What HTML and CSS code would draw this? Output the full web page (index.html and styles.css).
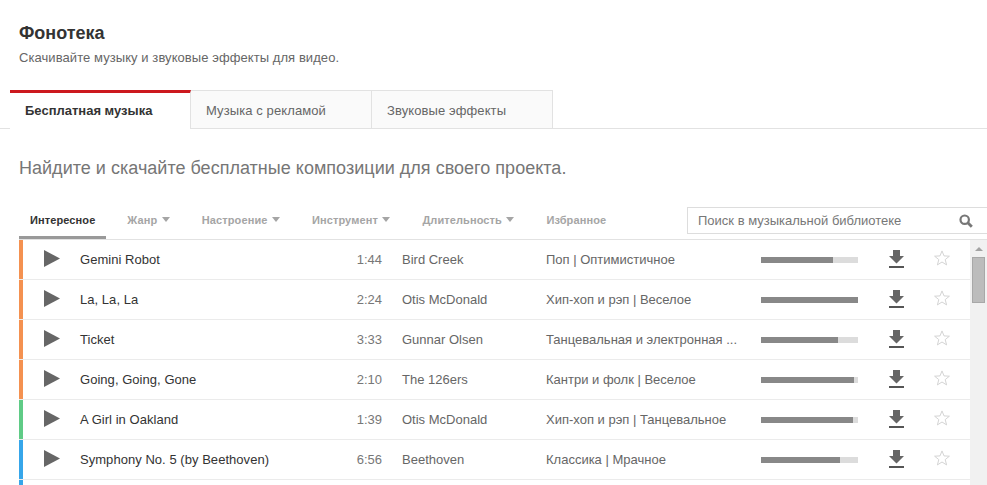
FILE: index.html
```html
<!DOCTYPE html>
<html lang="ru">
<head>
<meta charset="utf-8">
<title>Фонотека</title>
<link rel="stylesheet" href="styles.css">
</head>
<body>
<svg class="defs" width="0" height="0" aria-hidden="true">
  <symbol id="play" viewBox="0 0 16 17"><path d="M0 0L16 8.5L0 17Z" fill="#666"/></symbol>
  <symbol id="dl" viewBox="0 0 15 18"><path d="M4 0H11V6H15L7.5 13.5L0 6H4Z" fill="#666"/><rect y="16" width="15" height="2" fill="#555"/></symbol>
  <symbol id="star" viewBox="0 0 16 16"><path d="M8 .9L10 5.9L15.4 6.2L11.2 9.6L12.6 14.9L8 12L3.4 14.9L4.8 9.6L.6 6.2L6 5.9Z" fill="#fff" stroke="#d4d4d4" stroke-width="1"/></symbol>
</svg>
<header class="head">
  <h1 class="title">Фонотека</h1>
  <p class="sub">Скачивайте музыку и звуковые эффекты для видео.</p>
</header>
<nav class="tabs">
  <a class="tab tab-on">Бесплатная музыка</a>
  <a class="tab">Музыка с рекламой</a>
  <a class="tab">Звуковые эффекты</a>
</nav>
<h2 class="lead">Найдите и скачайте бесплатные композиции для своего проекта.</h2>
<div class="bar">
  <div class="filters">
    <a class="filter filter-on">Интересное</a>
    <a class="filter">Жанр<i class="caret"></i></a>
    <a class="filter">Настроение<i class="caret"></i></a>
    <a class="filter">Инструмент<i class="caret"></i></a>
    <a class="filter">Длительность<i class="caret"></i></a>
    <a class="filter">Избранное</a>
  </div>
  <div class="search">
    <span class="search-text">Поиск в музыкальной библиотеке</span>
    <svg class="search-icon" width="14" height="14" viewBox="0 0 14 14"><circle cx="5.7" cy="5.7" r="4.2" fill="none" stroke="#777" stroke-width="2.2"/><path d="M8.8 8.8L12.8 12.8" stroke="#777" stroke-width="2.8"/></svg>
  </div>
</div>
<div class="panel">
  <div class="list">
    <div class="row orange"><svg class="play"><use href="#play"/></svg><span class="name">Gemini Robot</span><span class="time">1:44</span><span class="artist">Bird Creek</span><span class="genre">Поп | Оптимистичное</span><span class="meter"><b style="width:74%"></b></span><svg class="dl"><use href="#dl"/></svg><svg class="star"><use href="#star"/></svg></div>
    <div class="row orange"><svg class="play"><use href="#play"/></svg><span class="name">La, La, La</span><span class="time">2:24</span><span class="artist">Otis McDonald</span><span class="genre">Хип-хоп и рэп | Веселое</span><span class="meter"><b style="width:100%"></b></span><svg class="dl"><use href="#dl"/></svg><svg class="star"><use href="#star"/></svg></div>
    <div class="row orange"><svg class="play"><use href="#play"/></svg><span class="name">Ticket</span><span class="time">3:33</span><span class="artist">Gunnar Olsen</span><span class="genre">Танцевальная и электронная ...</span><span class="meter"><b style="width:79%"></b></span><svg class="dl"><use href="#dl"/></svg><svg class="star"><use href="#star"/></svg></div>
    <div class="row orange"><svg class="play"><use href="#play"/></svg><span class="name">Going, Going, Gone</span><span class="time">2:10</span><span class="artist">The 126ers</span><span class="genre">Кантри и фолк | Веселое</span><span class="meter"><b style="width:96%"></b></span><svg class="dl"><use href="#dl"/></svg><svg class="star"><use href="#star"/></svg></div>
    <div class="row green"><svg class="play"><use href="#play"/></svg><span class="name">A Girl in Oakland</span><span class="time">1:39</span><span class="artist">Otis McDonald</span><span class="genre">Хип-хоп и рэп | Танцевальное</span><span class="meter"><b style="width:95%"></b></span><svg class="dl"><use href="#dl"/></svg><svg class="star"><use href="#star"/></svg></div>
    <div class="row blue"><svg class="play"><use href="#play"/></svg><span class="name">Symphony No. 5 (by Beethoven)</span><span class="time">6:56</span><span class="artist">Beethoven</span><span class="genre">Классика | Мрачное</span><span class="meter"><b style="width:81%"></b></span><svg class="dl"><use href="#dl"/></svg><svg class="star"><use href="#star"/></svg></div>
    <div class="row blue"></div>
  </div>
  <div class="scroll">
    <i class="scroll-up"></i>
    <i class="scroll-thumb"></i>
  </div>
</div>
</body>
</html>
```
FILE: styles.css
```css
html, body { margin: 0; padding: 0; height: 485px; overflow: hidden; background: #fff; }
body { font-family: "Liberation Sans", Arial, sans-serif; color: #333; }
.defs { position: absolute; }
.head { padding: 23px 19px 0; height: 67px; box-sizing: border-box; }
.title { margin: 0; font-size: 18px; line-height: 20px; font-weight: 700; color: #333; }
.sub { margin: 7px 0 0; font-size: 13px; line-height: 16px; letter-spacing: .07px; color: #666; }
.tabs { display: flex; padding-left: 10px; height: 39px; box-sizing: border-box; border-bottom: 1px solid #e2e2e2; margin-top: 23px; }
.tab { width: 181px; height: 38px; box-sizing: border-box; padding: 12px 0 0 15px; font-size: 13px; line-height: 15px; letter-spacing: .1px; color: #666; background: #fafafa; border: 1px solid #e2e2e2; border-left: 0; border-bottom: 0; }
.tab-on { width: 181px; height: 39px; font-weight: 700; letter-spacing: 0; color: #333; background: #fff; border-top: 3px solid #cc181e; border-right: 1px solid #e2e2e2; padding-top: 10px; position: relative; }
.lead { margin: 28px 0 0 19px; font-size: 18px; line-height: 22px; font-weight: 400; letter-spacing: .02px; color: #767676; }
.bar { display: flex; justify-content: space-between; margin: 28px 0 0 19px; height: 32px; box-sizing: border-box; }
.filters { display: flex; gap: 10px; }
.filter { display: block; height: 31px; padding: 7px 11px 0; box-sizing: border-box; font-size: 11px; line-height: 13px; font-weight: 700; letter-spacing: .1px; color: #a5a5a5; }
.filter-on { color: #333; border-bottom: 3px solid #999; height: 32px; }
.caret { display: inline-block; margin-left: 4.5px; vertical-align: 2px; border: 4px solid transparent; border-top: 5px solid #a5a5a5; border-bottom: 0; }
.search { width: 300px; height: 27px; box-sizing: border-box; border: 1px solid #ddd; border-right: 0; display: flex; align-items: center; justify-content: space-between; padding: 0 14px 0 10px; }
.search-text { font-size: 13px; color: #777; }
.search-icon { display: block; }
.panel { display: flex; margin-left: 19px; height: 246px; overflow: hidden; border-top: 1px solid #e2e2e2; }
.list { width: 951px; }
.row { display: flex; align-items: center; height: 40px; box-sizing: border-box; border-bottom: 1px solid #ebebeb; font-size: 13px; position: relative; }
.row::before { content: ""; position: absolute; left: 0; top: 0; bottom: 0; width: 4px; }
.orange::before { background: #f49150; }
.green::before { background: #5fcb86; }
.blue::before { background: #36a6ea; }
.play { width: 16px; height: 17px; margin: -2px 0 0 25px; flex: none; }
.name { width: 247px; margin-left: 20px; color: #333; letter-spacing: .04px; flex: none; }
.time { width: 55px; text-align: right; color: #777; flex: none; }
.artist { width: 144px; margin-left: 20px; color: #666; flex: none; }
.genre { width: 215px; color: #666; flex: none; white-space: nowrap; }
.meter { display: block; width: 97px; height: 6px; background: #dcdcdc; flex: none; }
.meter b { display: block; height: 6px; background: #888; }
.dl { width: 15px; height: 18px; margin: -1px 0 0 31px; flex: none; }
.star { width: 16px; height: 16px; margin: -3px 0 0 30px; flex: none; }
.scroll { width: 17px; background: #f1f1f1; position: relative; flex: none; }
.scroll-up { position: absolute; left: 5px; top: 7px; border: 4px solid transparent; border-bottom: 4px solid #a3a3a3; border-top: 0; }
.scroll-thumb { position: absolute; left: 2px; top: 17px; width: 13px; height: 46px; box-sizing: border-box; background: #bcbcbc; border: 1px solid #a8a8a8; }
```
